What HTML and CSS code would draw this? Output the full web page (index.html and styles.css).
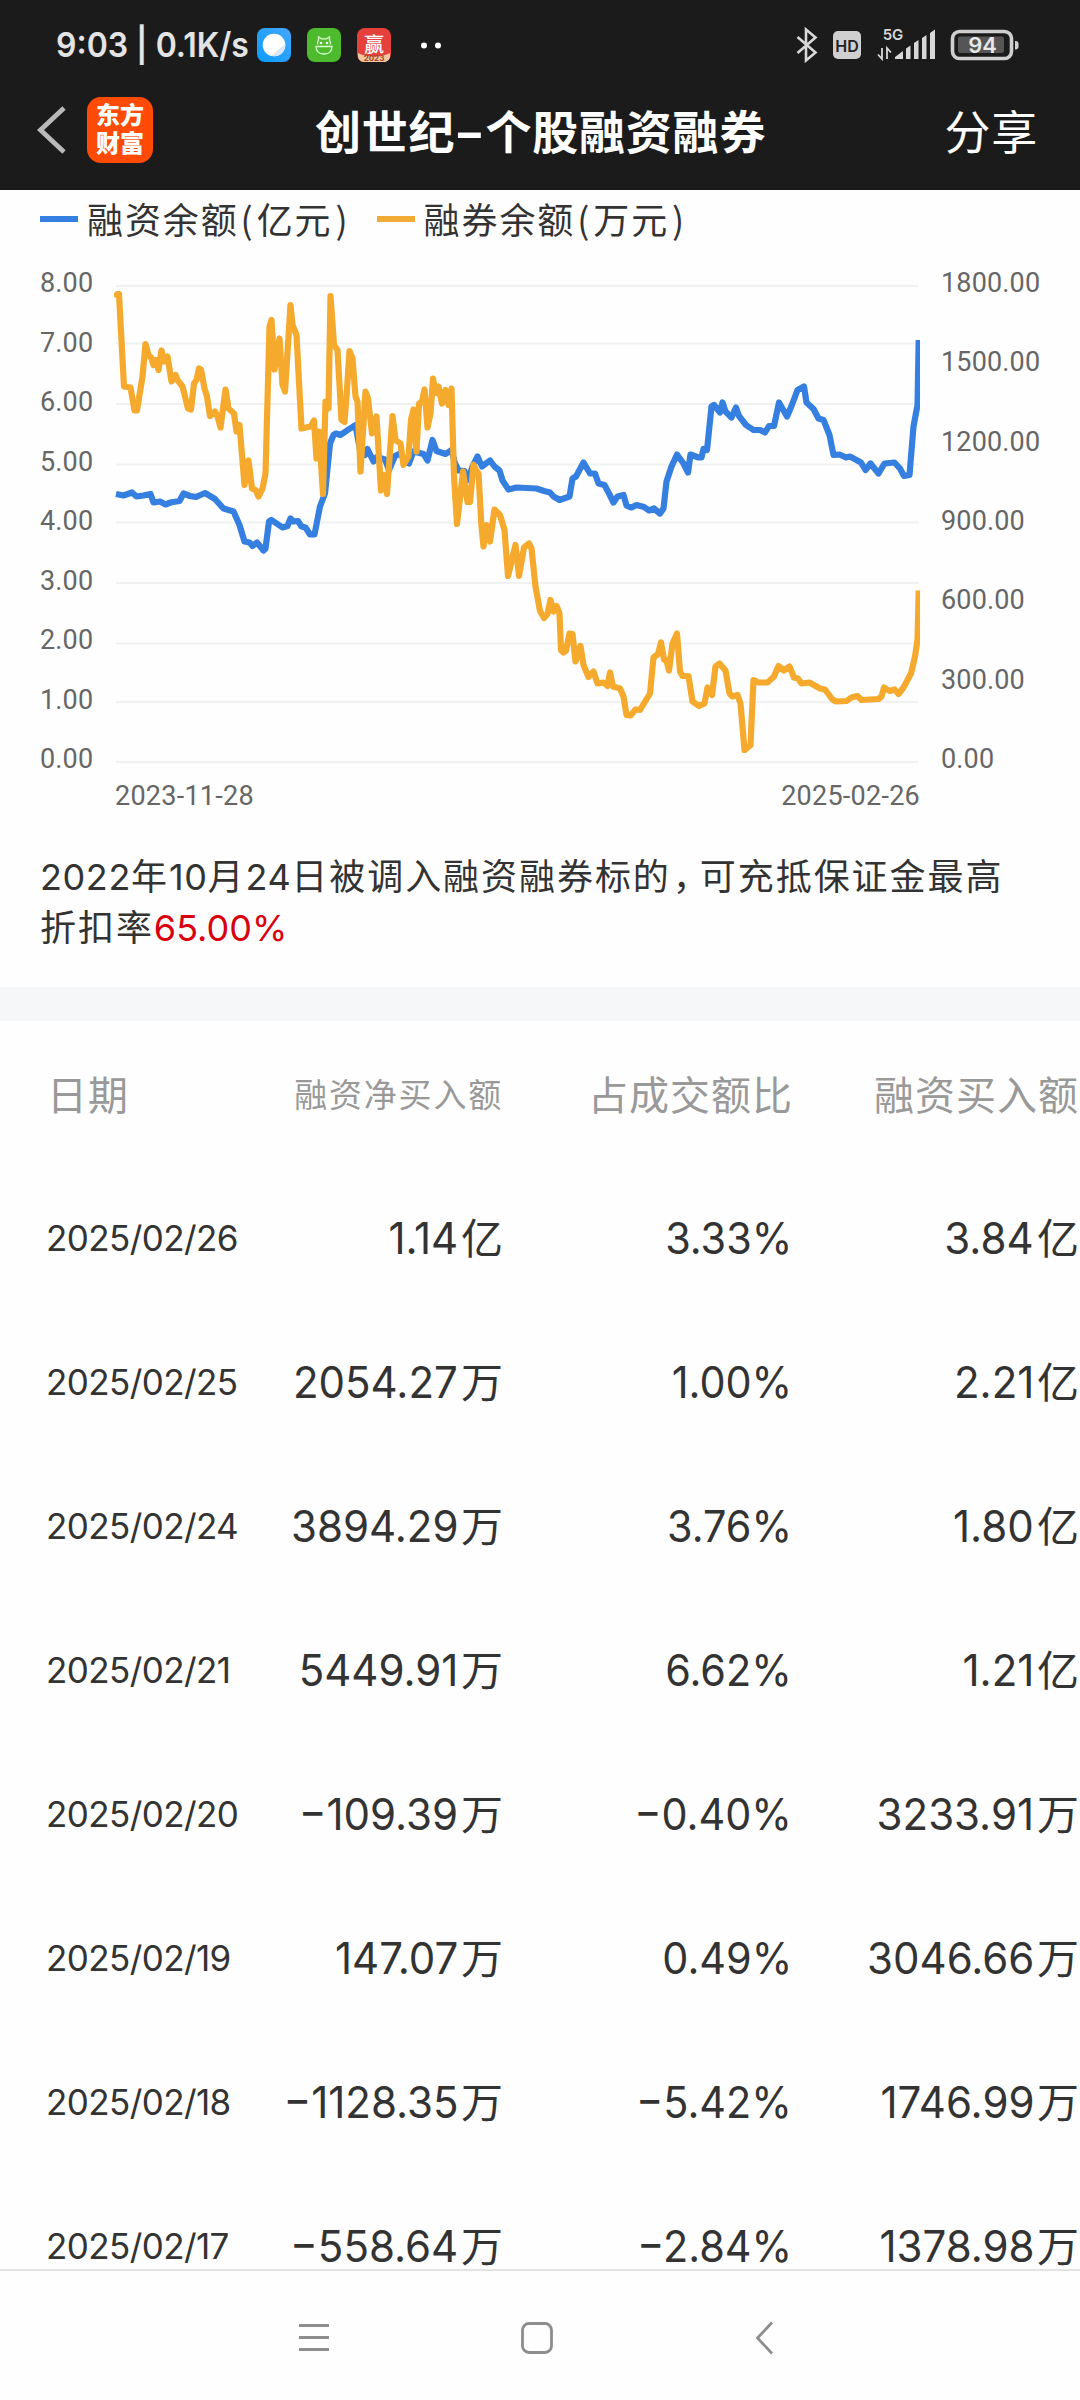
FILE: index.html
```html
<!DOCTYPE html>
<html lang="zh-CN">
<head>
<meta charset="utf-8">
<title>创世纪-个股融资融券</title>
<link rel="stylesheet" href="styles.css">
</head>
<body>
<div class="screen">
  <header class="top">
    <div class="status">
      <span class="clock"><span class="fit">9:03 | 0.1K/s</span></span>
      <svg class="apps" width="190" height="36" viewBox="256 27 190 36">
        <defs>
          <linearGradient id="sky" x1="0" y1="1" x2="1" y2="0"><stop offset="0" stop-color="#0a9bff"/><stop offset="1" stop-color="#45a8fb"/></linearGradient>
        </defs>
        <rect x="257" y="28" width="34" height="34" rx="8" fill="url(#sky)"/>
        <circle cx="274" cy="45" r="11.3" fill="#fff"/>
        <path d="M285.3 44A11.3 11.3 0 0 1 271 55.800Z" fill="#d9e8f4"/>
        <rect x="307" y="28" width="34" height="34" rx="8" fill="#4dbb2d"/>
        <g fill="none" stroke="#d9ffd0" stroke-width="1.300">
          <path d="M317.500 44.500c0-2 .2-3 1-4.300v-3.200l3 1.800h5l3-1.800v3.200c.8 1.300 1 2.300 1 4.300M316 46.500h16c0 4-2.500 7.500-8 7.500s-8-3.500-8-7.500z"/>
        </g>
        <circle cx="321" cy="43" r="1.300" fill="#fff"/><circle cx="327" cy="43" r="1.300" fill="#fff"/>
        <rect x="357" y="28" width="34" height="34" rx="8" fill="#e5403c"/>
        <path d="M358 53c8 4.500 24 4.500 32 0v3c0 4-3 6-7 6h-18c-4 0-7-2-7-6z" fill="#f3c59f"/>
        <text x="374" y="51.500" class="app-glyph">赢</text>
        <text x="374" y="61" class="app-tag">2023</text>
        <circle cx="424" cy="45.500" r="3" fill="#fff"/><circle cx="438" cy="45.500" r="3" fill="#fff"/>
      </svg>
      <svg class="system" width="226" height="40" viewBox="795 25 226 40">
        <path d="M797.500 37l18 15.500-9.500 8V29.500l9.500 8-18 15.500" fill="none" stroke="#d8d8d8" stroke-width="2.600"/>
        <rect x="833" y="31" width="28" height="28" rx="5" fill="#d0d0d0"/>
        <text x="847" y="52" class="hd">HD</text>
        <text x="893" y="40" class="net">5G</text>
        <g fill="none" stroke="#d8d8d8" stroke-width="1.800"><path d="M882 48v11l-4-4.500M887 59V48l4 4.500"/></g>
        <path d="M895 59v-2l8-6v8zM906 59V48.500l4.500-3V59zM914 59V43l4.500-3V59zM922 59V38l4.500-3V59zM930 59V33l5-3.500V59z" fill="#d8d8d8"/>
        <rect x="952.500" y="31.500" width="59" height="27" rx="7" fill="none" stroke="#cfcfcf" stroke-width="3.600"/>
        <rect x="958" y="36.500" width="46" height="16.500" rx="2" fill="#555"/>
        <path d="M1015 41c2.500 0 3.500 1 3.500 3v2.500c0 2-1 3-3.500 3z" fill="#cfcfcf"/>
        <text x="982.500" y="53" class="level">94</text>
      </svg>
    </div>
    <div class="bar">
      <svg class="back" width="34" height="54" viewBox="36 103 34 54"><path d="M64 108L40.500 130L64 152" fill="none" stroke="#b9b9b9" stroke-width="4.800"/></svg>
      <div class="logo"><span>东方</span><span>财富</span></div>
      <h1 class="title">创世纪<span class="dash">-</span>个股融资融券</h1>
      <span class="share">分享</span>
    </div>
  </header>

  <section class="legend">
    <i class="key blue"></i><span>融资余额<span class="open">(</span>亿元<span class="close">)</span></span>
    <i class="key orange"></i><span>融券余额<span class="open">(</span>万元<span class="close">)</span></span>
  </section>

  <section class="chart">
    <div class="axis left"><span>8.00</span><span>7.00</span><span>6.00</span><span>5.00</span><span>4.00</span><span>3.00</span><span>2.00</span><span>1.00</span><span>0.00</span></div>
    <svg class="plot" width="806" height="490" viewBox="114 278 806 490">
      <g stroke="#f0f1f2" stroke-width="2"><path d="M116 286H919M116 343.500H919M116 404H919M116 464.500H919M116 522.500H919M116 583H919M116 643.500H919M116 702H919M116 762H919"/></g>
      <g fill="none" stroke-width="6.200" stroke-linejoin="round">
      <polyline stroke="#347fdf" points="116,494 123.5,495.500 132,492.500 136.500,496.500 143.500,495.500 150.500,494 153.500,502.500 160,501.500 165.500,504.500 170.500,502.500 179.500,501 183.500,493.500 190,496 196,497 205,493 215,499 223.500,508.500 233.500,511.500 239.500,525 244.500,541.500 249.500,542.500 252.500,546 257,542.500 263.500,550.500 265.500,548.500 269,521.500 271.500,520 282.500,527.500 287.500,526 290.500,518.500 293.500,521.500 298,521 301.500,526.500 305.500,527.500 310,534.500 314.500,534.500 320,506.500 325,493.500 330,443.500 333.500,435 336,433.500 340.500,435 348.500,429.500 355.500,425 360,450 365,455 367.500,449 373.500,461.500 377,457 385,459.500 389,470 395,456 400,453.500 404.500,460 409,463.500 413.500,451.500 423.500,454 427.500,460.500 432.500,440 436.500,451 445.500,454 451.500,450 455,463.500 458.500,470.500 464.500,471 468.500,480 472.500,466.500 477.500,456.500 482,466.500 490,460.500 494.500,466.500 499.500,470.500 502.500,480.500 508.500,489.500 516.500,487.500 536.500,488.500 544,491 550,492.500 553.500,496.500 559.500,500 569.500,496.500 572.500,478.500 576,476.500 583.500,462.500 590,473.500 595,473.500 598.500,483.500 604.500,485 609,493.500 613.500,502.500 617.500,496.500 623.500,495 626.500,505.500 631.500,507.500 636.500,505 644,507 649,510.500 654,508.500 660,513.500 663.500,508.500 666.500,481.500 671.500,466.500 677,454.500 683.500,463.500 688,472.500 690.500,454.500 698.500,457.500 701.500,457.500 703.500,449 707,450 711.500,406.500 714,405 720,412.500 722.500,402.500 725.500,411.500 731.500,417.500 736,407.500 739,416 746,425 753.500,430 760,430 765,432.500 769,426 774,426 779,402.500 787,416.500 791.500,406 797.500,390 804,386.500 806.500,402.500 813.500,409 818.500,418.500 823.500,420 829.500,435 833.500,455 839.500,454.500 846,457.500 850,456.500 861,462.500 865.500,470 870.500,463.500 878.500,473.500 884.500,463.500 894.500,462.500 900,468.500 904,476 909.500,475 913.500,426.500 917.500,405 918.700,340"/>
      <polyline stroke="#f5aa2d" points="115,297.500 117.500,294 119,294 124,386.500 130.500,387.500 134.500,410.500 137,410.500 142.500,376.500 145.500,344 148.500,355 151,357.500 153.500,365 156,360 158.500,370 161.500,350.500 164,361.500 167.500,356.500 171.500,381.500 175.500,375 177.500,380 182.500,386.500 188,408.500 191,409.500 194,383.500 196.500,380 199,368.500 201,369.500 204.500,388.500 207,396.500 210,416 215,411.500 217.500,416.500 220.500,427.500 225.500,389.500 228.500,408.500 234,413.500 236.500,431.500 239.500,425 244.500,485 248.500,460.500 252,488.500 255.500,490 258.500,496.500 262.500,488.500 265.500,473.500 269.500,326.500 271.500,320 274.500,369.500 279.500,338.500 282.500,385 285,391.500 290.500,305 292.500,325 296.500,335 301.500,428.500 310.500,426.500 314,420.500 316.500,458.500 319,431.500 323,494 325.500,401.500 328.500,408.500 330.500,296 334,345 337.500,350 341.500,420 344.500,422 346.500,396.500 349.500,351 352.500,358.500 355.500,396.500 357.500,401.500 360.500,471.500 365.500,391.500 368,398.500 372,433.500 376.500,416.500 381,490.500 384,475 387,494 392.500,416 395.500,440 400.500,443.500 403.500,465 408.500,456.500 411,420 413.500,409.500 416.500,451.500 419,404 422,401.500 424.500,389.500 427.500,427.500 430.500,413.500 433,378.500 435.500,393 438.500,386.500 442,403.500 445.500,390 448.500,405 451.500,388.500 454,476.500 457,524 463,471.500 467.500,502 470,502 473.500,464.500 476,470 478.500,473.500 481.500,526.500 483.500,546.500 486.500,525 490,541.500 494.500,509.500 500,515 504.500,530 508,576 515.500,545 519,576 524,547.500 529,543.500 531.500,548.500 535.500,586.500 540,611 544,618 547.500,614 550.500,600 553.500,611.500 556.500,606 559.500,613.500 561,650 563.500,652.500 566,650.500 569.500,633.500 572.500,634 575.500,661.500 580.500,646 583.500,665 588.500,677 593.500,671.500 597.500,683.500 603.500,682.500 607.500,686 610,672.500 613,686.500 620,688.500 623.500,696.500 626.500,715 630.500,715.500 635.500,709.500 640,710 646,700 650,693.500 653.500,657.500 658,654 661,642.500 664,659.500 666.500,660.500 669,670.500 672.500,643.500 677,633.500 680,671.500 682.500,676 688.500,676 692.500,701.500 699,706 704.500,703.500 707.500,687.500 712,695 715.500,666.500 719.500,663.500 725.500,670.500 729.500,693.500 732.500,696.500 737.500,695 740.500,703.500 744.500,750 750.500,745 753.500,680 758.500,682.500 767.500,682.500 774,676.500 778.500,666 784,670.500 789.500,666.500 794,677.500 798,678.500 801.500,683.500 809.500,682.500 820,688.500 825,689.500 832.500,699.500 836,701.500 846.500,701 851.500,697.500 857.500,696 861.500,700 878.500,699 881.500,696.500 884,687.500 889.500,691 894.500,689.500 898.500,694 903.500,687.500 911,673.500 915,656.500 917.500,640 918.700,590.500"/>
      </g>
    </svg>
    <div class="axis right"><span>1800.00</span><span>1500.00</span><span>1200.00</span><span>900.00</span><span>600.00</span><span>300.00</span><span>0.00</span></div>
    <div class="dates"><span>2023-11-28</span><span>2025-02-26</span></div>
  </section>

  <p class="note"><span class="d">2022</span>年<span class="d">10</span>月<span class="d">24</span>日被调入融资融券标的<span class="comma">，</span>可充抵保证金最高<br>折扣率<b class="rate">65.00%</b></p>
  <div class="divider"></div>

  <section class="table">
    <div class="row head"><span>日期</span><span class="narrow">融资净买入额</span><span>占成交额比</span><span>融资买入额</span></div>
    <div class="row"><span class="date">2025/02/26</span><span class="amount"><b>1.14</b>亿</span><span class="pct"><b>3.33%</b></span><span class="amount"><b>3.84</b>亿</span></div>
    <div class="row"><span class="date">2025/02/25</span><span class="amount"><b>2054.27</b>万</span><span class="pct"><b>1.00%</b></span><span class="amount"><b>2.21</b>亿</span></div>
    <div class="row"><span class="date">2025/02/24</span><span class="amount"><b>3894.29</b>万</span><span class="pct"><b>3.76%</b></span><span class="amount"><b>1.80</b>亿</span></div>
    <div class="row"><span class="date">2025/02/21</span><span class="amount"><b>5449.91</b>万</span><span class="pct"><b>6.62%</b></span><span class="amount"><b>1.21</b>亿</span></div>
    <div class="row"><span class="date">2025/02/20</span><span class="amount"><b>−109.39</b>万</span><span class="pct"><b>−0.40%</b></span><span class="amount"><b>3233.91</b>万</span></div>
    <div class="row"><span class="date">2025/02/19</span><span class="amount"><b>147.07</b>万</span><span class="pct"><b>0.49%</b></span><span class="amount"><b>3046.66</b>万</span></div>
    <div class="row"><span class="date">2025/02/18</span><span class="amount"><b>−1128.35</b>万</span><span class="pct"><b>−5.42%</b></span><span class="amount"><b>1746.99</b>万</span></div>
    <div class="row"><span class="date">2025/02/17</span><span class="amount"><b>−558.64</b>万</span><span class="pct"><b>−2.84%</b></span><span class="amount"><b>1378.98</b>万</span></div>
  </section>

  <nav class="nav">
    <svg width="1080" height="129" viewBox="0 2271 1080 129" fill="none" stroke="#8d8d8d" stroke-width="2.800">
      <path d="M299 2325.500h30M299 2337.500h30M299 2349.500h30"/>
      <rect x="522.500" y="2323.500" width="29" height="29" rx="6.500"/>
      <path d="M772 2322.500L757.500 2338L772 2353.500"/>
    </svg>
  </nav>
</div>
</body>
</html>
```
FILE: styles.css
```css
* { box-sizing: border-box; }
body { margin: 0; background: #fff; }
.screen {
  width: 1080px; height: 2400px; overflow: hidden;
  display: flex; flex-direction: column;
  background: #fefefe; color: #333;
  font-family: Inter, "Noto Sans CJK SC", sans-serif;
}

/* header */
.top { height: 190px; background: #1b1b1b; color: #fff; flex: none; }
.status { height: 90px; display: flex; align-items: center; padding: 0 59px 0 56px; }
.clock { width: 200px; font-size: 34px; font-weight: 600; line-height: 40px; color: #e4e4e4; white-space: nowrap; }
.fit { display: inline-block; transform-origin: left; transform: scaleX(.94); }
.apps { flex: none; }
.system { margin-left: auto; flex: none; }
.app-glyph { font: 500 20px "Noto Sans CJK SC"; fill: #fff; text-anchor: middle; }
.app-tag { font: 700 8px Inter; fill: #a4462c; text-anchor: middle; }
.hd { font: 600 16px Inter; fill: #222; text-anchor: middle; }
.net { font: 600 15px Inter; fill: #d8d8d8; text-anchor: middle; }
.level { font: 600 22px Inter; fill: #e8e8e8; text-anchor: middle; }
.bar { height: 80px; display: flex; align-items: center; padding: 0 42px 0 36px; }
.back { flex: none; }
.logo {
  flex: none; width: 66px; height: 66px; margin-left: 17px; border-radius: 14px;
  background: #ff4b05; display: flex; flex-direction: column; align-items: center; justify-content: center;
}
.logo span { font-size: 24px; font-weight: 900; line-height: 28px; }
.title { margin: 3px 0 0 162px; font-size: 46px; line-height: 60px; font-weight: 700; letter-spacing: .8px; white-space: nowrap; }
.dash { display: inline-block; width: 30px; text-align: center; transform: scaleX(1.500); }
.share { margin: 3px 0 0 auto; font-size: 46px; line-height: 60px; letter-spacing: .8px; }

/* legend */
.legend { height: 60px; padding: 0 0 5px 40px; display: flex; align-items: center; font-family: "Noto Sans CJK SC", sans-serif; font-size: 36px; line-height: 54px; letter-spacing: 1.900px; }
.key { width: 38px; height: 6px; margin: 3px 9px 0 0; }
.key.blue { background: #347fdf; }
.key.orange { background: #f0ab34; margin-left: 27px; }
.open { margin: 0 2px 0 2px; }
.close { margin-left: 3px; }

/* chart */
.chart {
  height: 588px; flex: none; padding: 16px 0 0 40px;
  display: grid; grid-template-columns: 74px 806px 1fr; grid-template-rows: 512px 44px;
  font-family: Roboto, sans-serif; font-size: 27px; letter-spacing: .15px; color: #666;
}
.axis { display: flex; flex-direction: column; justify-content: space-between; height: 509px; padding-top: 1px; }
.axis span { line-height: 32px; }
.right { padding-left: 21px; }
.plot { margin-top: 12px; }
.dates { grid-column: 2; display: flex; justify-content: space-between; line-height: 36px; padding: 0 0 0 1px; letter-spacing: .25px; }

/* note */
.note { margin: 11px 0 0; padding-left: 40px; height: 138px; flex: none; font-size: 36px; line-height: 51px; letter-spacing: 1.950px; white-space: nowrap; }
.d { letter-spacing: .6px; }
.comma { font-family: "Noto Sans CJK SC", sans-serif; font-feature-settings: "halt"; margin: 0 7px 0 2px; }
.rate { font-weight: 400; color: #d9000f; letter-spacing: 0; }
.divider { height: 34px; background: #f5f7f9; flex: none; }

/* table */
.table { height: 1248px; flex: none; padding-top: 1px; }
.row { height: 144px; display: grid; grid-template-columns: 240px 263px 290px 286px; align-items: center; text-align: right; font-size: 42px; white-space: nowrap; }
.row b { display: inline-block; font-size: 44px; font-weight: 400; transform: scaleX(.955); transform-origin: right; padding-right: 3px; }
.row .pct b { padding-right: 1px; transform: scaleX(.94); }
.row > :first-child { text-align: left; padding-left: 46px; }
.amount { padding-bottom: 5px; }
.head { font-size: 40px; letter-spacing: 1px; color: #999; }
.head > span { padding-bottom: 2px; }
.head > :first-child { padding-left: 47px; }
.head .narrow { font-size: 33px; letter-spacing: 1.800px; }
.row .date { font-size: 35px; letter-spacing: -.6px; }

.nav { height: 131px; border-top: 2px solid #e3e3e3; background: #fefefe; flex: none; }
.nav svg { display: block; }
```
